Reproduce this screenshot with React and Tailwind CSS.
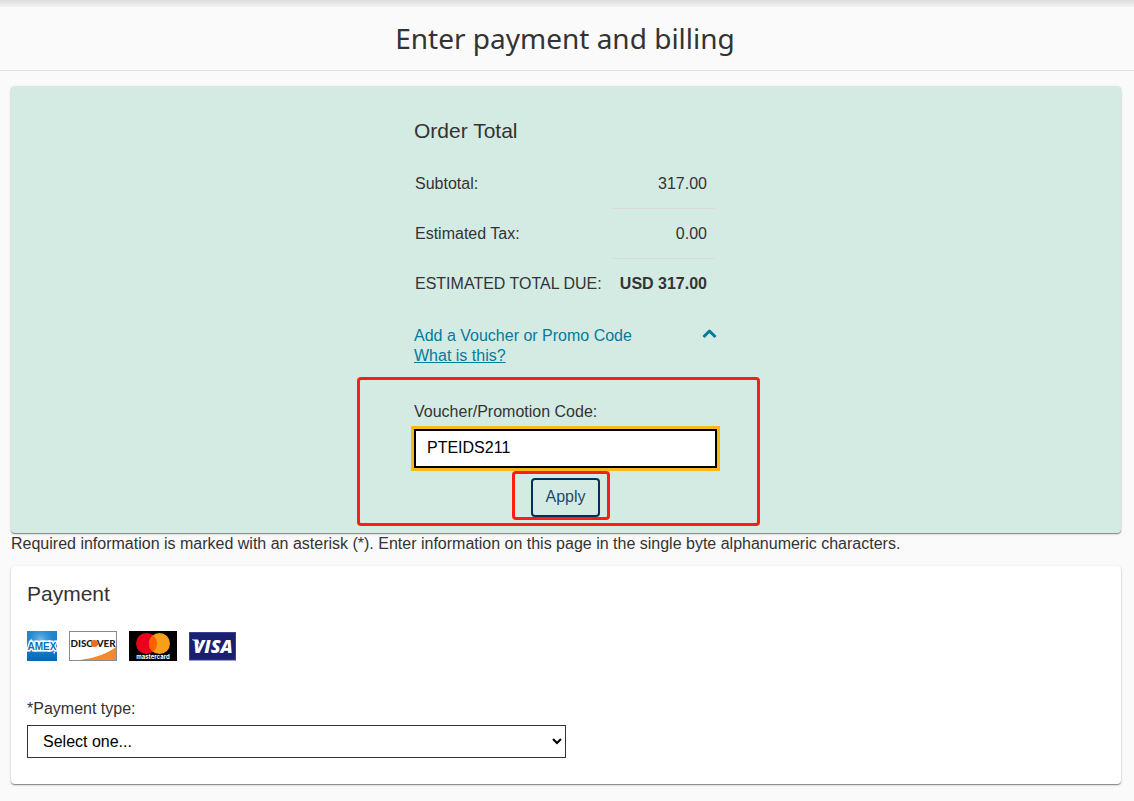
import { useState } from "react";

function AmexLogo() {
  return (
    <svg role="img" aria-label="American Express" className="h-[30px] w-[30px]" viewBox="0 0 30 30">
      <defs>
        <linearGradient id="amex" x1="0" y1="0" x2="0" y2="1">
          <stop offset="0" stopColor="#1f86cc" />
          <stop offset="0.5" stopColor="#1f7fc8" />
          <stop offset="1" stopColor="#0567b8" />
        </linearGradient>
        <radialGradient id="amexGlow" cx="0.45" cy="0.3" r="0.5">
          <stop offset="0" stopColor="#8accf0" stopOpacity="0.8" />
          <stop offset="1" stopColor="#2f97d6" stopOpacity="0" />
        </radialGradient>
      </defs>
      <rect width="30" height="30" fill="url(#amex)" />
      <rect width="30" height="30" fill="url(#amexGlow)" />
      <text x="15" y="19" textAnchor="middle" fontFamily="Liberation Sans, sans-serif" fontWeight="700" fontSize="10" fill="#0a6fc0" stroke="#fff" strokeWidth="2.800" paintOrder="stroke">AMEX</text>
      <rect x="26.500" y="21" width="1.500" height="1.500" fill="#e6f2fb" />
    </svg>
  );
}

function DiscoverLogo() {
  return (
    <svg role="img" aria-label="Discover" className="h-[30px] w-12" viewBox="0 0 48 30">
      <rect x="0.5" y="0.5" width="47" height="29" fill="#fff" stroke="#8a8a8a" />
      <path d="M47 16 C39 22 27 27 11 29 L47 29 Z" fill="#f58a2c" />
      <text x="1.500" y="16" fontFamily="Lato, sans-serif" fontWeight="900" fontSize="9.800" fill="#1a1a1a">DISC</text>
      <text x="46.500" y="16" textAnchor="end" fontFamily="Lato, sans-serif" fontWeight="900" fontSize="9.800" fill="#1a1a1a">VER</text>
      <circle cx="25.500" cy="12.500" r="3.600" fill="#ee6a1f" />
    </svg>
  );
}

function MastercardLogo() {
  return (
    <svg role="img" aria-label="Mastercard" className="h-[30px] w-12" viewBox="0 0 48 30">
      <rect width="48" height="30" fill="#000" />
      <circle cx="17.500" cy="12.500" r="10.500" fill="#eb001b" />
      <circle cx="30.500" cy="12.500" r="10.500" fill="#f79e1b" />
      <path d="M24 4.250 A10.500 10.500 0 0 1 24 20.750 A10.500 10.500 0 0 1 24 4.250 Z" fill="#ff5f00" />
      <text x="24" y="28" textAnchor="middle" fontFamily="Inter, sans-serif" fontWeight="700" fontSize="6" fill="#fff">mastercard</text>
    </svg>
  );
}

function VisaLogo() {
  return (
    <svg role="img" aria-label="Visa" className="h-[30px] w-[47px]" viewBox="0 0 47 30">
      <rect x="0.5" y="1.500" width="46" height="27.500" fill="#1a1f71" stroke="#3a4090" />
      <text x="24" y="21.500" textAnchor="middle" fontFamily="Open Sans, sans-serif" fontStyle="italic" fontWeight="800" fontSize="18" fill="#fff">VISA</text>
      <path d="M3 8.500 L9 8.500 L11 14 C9 11.500 6.500 9.500 3 9 Z" fill="#fff" />
    </svg>
  );
}

const cardShadow = "rounded shadow-[0_1px_1px_0_rgba(0,0,0,0.4),0_1px_3px_0_rgba(0,0,0,0.15)]";

function AmountRow({ label, amount, last, strong }) {
  return (
    <tr className="h-[50px]">
      <th scope="row" className="w-[198px] pt-0.5 pl-px text-left font-normal whitespace-nowrap">{label}</th>
      <td className={"pt-0.5 pr-2 text-right whitespace-nowrap " + (last ? "" : "border-b border-[#dfd9dd] ") + (strong ? "font-bold" : "")}>
        {amount}
      </td>
    </tr>
  );
}

function OrderTotal() {
  const [open, setOpen] = useState(true);
  const [code, setCode] = useState("PTEIDS211");
  return (
    <section className={"bg-[#d4ebe4] pt-8 pb-4 " + cardShadow}>
      <div className="mx-auto w-[304px]">
        <h2 className="text-[21px] leading-[26px]">Order Total</h2>
        <table className="mt-[14px] w-[301px] border-collapse">
          <tbody>
            <AmountRow label="Subtotal:" amount="317.00" />
            <AmountRow label="Estimated Tax:" amount="0.00" />
            <AmountRow label="ESTIMATED TOTAL DUE:" amount="USD 317.00" last strong />
          </tbody>
        </table>
        <button type="button" aria-expanded={open} onClick={() => setOpen(!open)} className="mt-[18px] flex w-full items-start justify-between text-left text-[#047a9c]">
          <span>Add a Voucher or Promo Code</span>
          <svg aria-hidden="true" className={"h-4 w-4 " + (open ? "" : "rotate-180")} viewBox="0 0 16 16" fill="none" stroke="currentColor" strokeWidth="3">
            <path d="M1.500 11 L7.500 5 L13.500 11" strokeLinejoin="round" />
          </svg>
        </button>
        <a href="#voucher-help" className="block w-fit text-[#047a9c] underline">What is this?</a>
        {open && (
          <div className="relative mt-9 w-[303px]">
            <label htmlFor="voucher" className="block">Voucher/Promotion Code:</label>
            <input
              id="voucher"
              type="text"
              value={code}
              onChange={(e) => setCode(e.target.value)}
              className="mt-[7px] block h-[39px] w-full border-2 border-black bg-white px-[11px] pb-0.5 text-black ring-3 ring-[#ffb81c] outline-none"
            />
            <div className="relative mx-auto mt-[10px] w-fit">
              <button type="button" className="block h-[39px] w-[69px] rounded border-2 border-[#003057] pb-0.5 text-[#1f4a6b]">Apply</button>
              <span aria-hidden="true" className="pointer-events-none absolute -top-[7px] -right-[10px] -bottom-[3px] -left-[19px] rounded border-3 border-[#fa1f14]" />
            </div>
            <span aria-hidden="true" className="pointer-events-none absolute -top-[25px] -right-[43px] -bottom-[9px] -left-[57px] rounded border-3 border-[#fa1f14]" />
          </div>
        )}
      </div>
    </section>
  );
}

function Payment() {
  return (
    <section className={"bg-white px-4 pt-[15px] pb-[26px] " + cardShadow}>
      <h2 className="text-[21px] leading-[26px]">Payment</h2>
      <div className="mt-6 flex gap-3">
        <AmexLogo />
        <DiscoverLogo />
        <MastercardLogo />
        <VisaLogo />
      </div>
      <label htmlFor="payment-type" className="mt-[38px] block">*Payment type:</label>
      <select id="payment-type" className="mt-[6px] block h-[33px] w-1/2 border border-[#333] bg-white pl-[11px] text-black">
        <option>Select one...</option>
        <option>American Express</option>
        <option>Discover</option>
        <option>Mastercard</option>
        <option>Visa</option>
      </select>
    </section>
  );
}

export default function App() {
  return (
    <div className="min-h-screen bg-[#fafafa] font-['Liberation_Sans',Arial,sans-serif] text-[16px] leading-5 text-[#333]">
      <header className="border-b border-[#e0e0e0] bg-[linear-gradient(to_bottom,#dcdcdc_0,#f3f3f3_7px,#fafafa_7px)] pt-[18px] pr-1 pb-3">
        <h1 className="text-center font-['Noto_Sans','Open_Sans',sans-serif] text-[28px] leading-10">Enter payment and billing</h1>
      </header>
      <main className="pt-[15px] pr-[13px] pb-4 pl-[11px]">
        <OrderTotal />
        <p className="mt-px mb-3">
          Required information is marked with an asterisk (*). Enter information on this page in the single byte alphanumeric characters.
        </p>
        <Payment />
      </main>
    </div>
  );
}
